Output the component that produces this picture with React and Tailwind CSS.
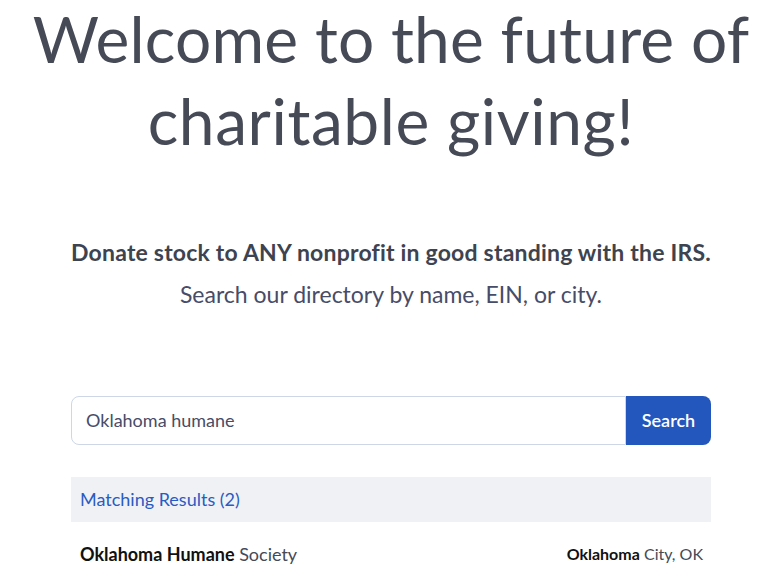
export default function App() {
  return (
    <div className="min-h-screen bg-white pl-[11px] font-['Lato','Noto_Sans',sans-serif] overflow-hidden">
      <h1 className="text-center text-[64px] font-normal text-[#454a56]">
        <span className="block leading-[77px] tracking-[0.2px]">Welcome to the future of</span>
        <span className="block leading-[83px] mt-[2px] tracking-[0.6px]">charitable giving!</span>
      </h1>
      <p className="mt-[75px] text-center text-[23px] leading-[30px] font-bold text-[#3e4350] tracking-[0.2px]">
        Donate stock to ANY nonprofit in good standing with the IRS.
      </p>
      <p className="mt-[12px] text-center text-[23px] leading-[30px] text-[#474c68]">
        Search our directory by name, EIN, or city.
      </p>
      <div className="mx-[60px] mt-[87px]">
        <div className="flex h-[49px]">
          <div className="flex-1 flex items-center rounded-l-[8px] border border-[#cdd7e6] pl-[14px] text-[18px] text-[#474c68]">
            Oklahoma humane
          </div>
          <button className="w-[85px] rounded-r-[8px] bg-[#2457bd] text-white text-[18px] font-semibold">
            Search
          </button>
        </div>
        <div className="mt-[32px] h-[45px] bg-[#f0f1f5] flex items-center pl-[9px] text-[18px] text-[#2a5bc2]">
          Matching Results (2)
        </div>
        <div className="flex justify-between items-center px-[9px] pr-[8px] h-[64px] text-[18px]">
          <span>
            <span className="font-bold text-[#111]">Oklahoma Humane</span>{" "}
            <span className="text-[#454a56]">Society</span>
          </span>
          <span className="text-[16px]">
            <span className="font-bold text-[#111]">Oklahoma</span>{" "}
            <span className="text-[#454a56]">City, OK</span>
          </span>
        </div>
      </div>
    </div>
  );
}
